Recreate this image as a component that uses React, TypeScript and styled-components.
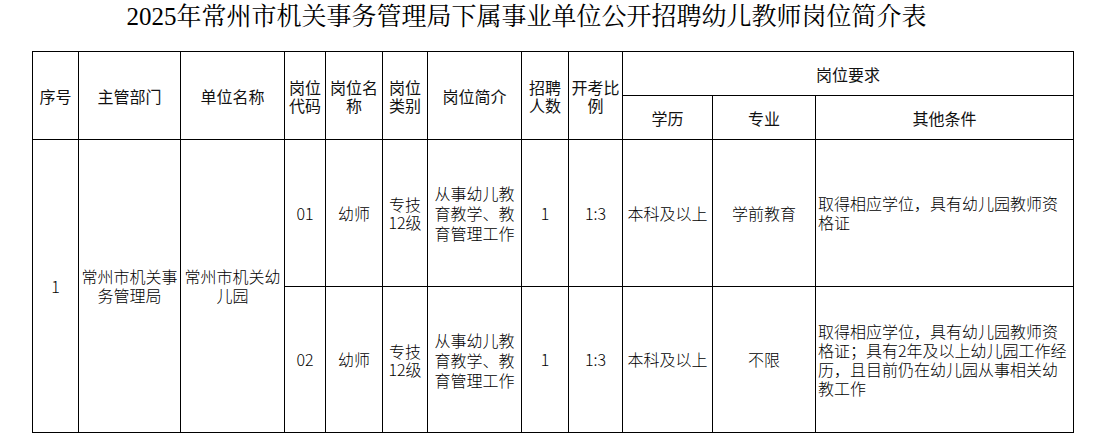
import React from "react";
import styled, { createGlobalStyle } from "styled-components";

const GlobalStyle = createGlobalStyle`
  html, body {
    margin: 0;
    padding: 0;
    background: #ffffff;
  }
  body {
    font-family: "Noto Sans CJK SC", "Noto Sans", sans-serif;
    color: #000;
  }
`;

const Page = styled.div`
  width: 1097px;
  padding-top: 4px;
  box-sizing: border-box;
`;

const Title = styled.h1`
  margin: 0 0 22px 0;
  padding-right: 44px;
  font-family: "Liberation Serif", "Noto Serif CJK SC", "Noto Sans CJK SC", serif;
  font-weight: 400;
  font-size: 25px;
  line-height: 25px;
  text-align: center;
  color: #000;
`;

const Table = styled.table`
  margin-left: 32px;
  border-collapse: collapse;
  table-layout: fixed;
  width: 1042px;
`;

const Th = styled.th`
  border: 1px solid #000;
  padding: 0 2px;
  height: 43px;
  font-family: "Noto Sans CJK SC", sans-serif;
  font-weight: 400;
  font-size: 16px;
  line-height: 18px;
  text-align: center;
  vertical-align: middle;
  color: #111;
`;

const Td = styled.td<{ $left?: boolean; $h?: number; $lh?: number }>`
  border: 1px solid #000;
  padding: 0 2px;
  height: ${(p) => (p.$h ? `${p.$h}px` : "auto")};
  font-family: "Noto Sans CJK SC", sans-serif;
  font-weight: 300;
  font-size: 16px;
  line-height: ${(p) => p.$lh ?? 19}px;
  text-align: ${(p) => (p.$left ? "left" : "center")};
  vertical-align: middle;
  color: #000;
`;

const widths = [46, 102, 104, 41, 57, 45, 94, 47, 54, 90, 103, 258];

type Row = {
  code: string;
  major: string;
  other: React.ReactNode;
  h: number;
};

const rows: Row[] = [
  {
    code: "01",
    major: "学前教育",
    other: (
      <>
        取得相应学位，具有幼儿园教师资
        <br />
        格证
      </>
    ),
    h: 146,
  },
  {
    code: "02",
    major: "不限",
    other: (
      <>
        取得相应学位，具有幼儿园教师资
        <br />
        格证；具有2年及以上幼儿园工作经
        <br />
        历，且目前仍在幼儿园从事相关幼
        <br />
        教工作
      </>
    ),
    h: 145,
  },
];

export default function App() {
  return (
    <Page>
      <GlobalStyle />
      <Title>2025年常州市机关事务管理局下属事业单位公开招聘幼儿教师岗位简介表</Title>
      <Table>
        <colgroup>
          {widths.map((w, i) => (
            <col key={i} style={{ width: w }} />
          ))}
        </colgroup>
        <thead>
          <tr>
            <Th rowSpan={2}>序号</Th>
            <Th rowSpan={2}>主管部门</Th>
            <Th rowSpan={2}>单位名称</Th>
            <Th rowSpan={2}>
              岗位
              <br />
              代码
            </Th>
            <Th rowSpan={2}>
              岗位名
              <br />称
            </Th>
            <Th rowSpan={2}>
              岗位
              <br />
              类别
            </Th>
            <Th rowSpan={2}>岗位简介</Th>
            <Th rowSpan={2}>
              招聘
              <br />
              人数
            </Th>
            <Th rowSpan={2}>
              开考比
              <br />例
            </Th>
            <Th colSpan={3}>岗位要求</Th>
          </tr>
          <tr>
            <Th>学历</Th>
            <Th>专业</Th>
            <Th>其他条件</Th>
          </tr>
        </thead>
        <tbody>
          {rows.map((r, i) => (
            <tr key={r.code}>
              {i === 0 && (
                <>
                  <Td rowSpan={2}>1</Td>
                  <Td rowSpan={2}>
                    常州市机关事
                    <br />
                    务管理局
                  </Td>
                  <Td rowSpan={2}>
                    常州市机关幼
                    <br />
                    儿园
                  </Td>
                </>
              )}
              <Td $h={r.h}>{r.code}</Td>
              <Td>幼师</Td>
              <Td $lh={18}>
                专技
                <br />
                12级
              </Td>
              <Td $lh={20}>
                从事幼儿教
                <br />
                育教学、教
                <br />
                育管理工作
              </Td>
              <Td>1</Td>
              <Td>1:3</Td>
              <Td>本科及以上</Td>
              <Td>{r.major}</Td>
              <Td $left>{r.other}</Td>
            </tr>
          ))}
        </tbody>
      </Table>
    </Page>
  );
}
